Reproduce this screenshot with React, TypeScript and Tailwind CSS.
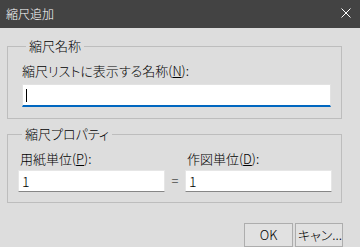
import React from "react";

const font = "font-['Noto_Sans_CJK_JP','Noto_Sans',sans-serif] [font-feature-settings:'palt'] font-light";

export default function App() {
  return (
    <div className={`w-[360px] h-[247px] bg-[#dddddd] flex flex-col text-black overflow-hidden ${font}`}>
      <div className="h-[28px] bg-[#434343] flex items-center justify-between pl-[6px] pr-[9px] text-white text-[12px] leading-[16px]">
        <span>縮尺追加</span>
        <svg width="10" height="10" viewBox="0 0 10 10" className="mt-[-2px]">
          <path d="M0.5 0.5 L9.5 9.5 M9.5 0.5 L0.5 9.5" stroke="#ffffff" strokeWidth="1" fill="none" />
        </svg>
      </div>
      <div className="flex flex-col pl-[7px] pt-[10px]">
        <fieldset className="w-[335px] border border-[#bdbdbd] pl-[14px] pb-[11px]">
          <legend className="ml-[4px] px-[3px] text-[13px] leading-[16px]">縮尺名称</legend>
          <div className="pt-[9px] text-[13px] leading-[16px]">
            縮尺リストに表示する名称(<span className="underline">N</span>):
          </div>
          <div className="mt-[5px] w-[309px] h-[23px] bg-white border border-[#e2e2e2] border-b-2 border-b-[#0067c0] flex items-center pl-[3px]">
            <div className="w-[1px] h-[13px] bg-black" />
          </div>
        </fieldset>
        <fieldset className="mt-[7px] w-[335px] border border-[#bdbdbd] pl-[10px] pb-[10px]">
          <legend className="ml-[4px] px-[3px] text-[13px] leading-[16px]">縮尺プロパティ</legend>
          <div className="pt-[9px] flex items-end text-[13px]">
            <div className="w-[147px] flex flex-col">
              <div className="pl-[2px] leading-[16px]">
                用紙単位(<span className="underline">P</span>):
              </div>
              <div className="mt-[3px] h-[22px] bg-white border border-[#e6e6e6] border-b-[#868686] flex items-center pl-[3px] text-[14px] leading-[16px]">
                1
              </div>
            </div>
            <div className="w-[20px] h-[22px] flex items-center justify-center text-[13px] leading-[16px]">=</div>
            <div className="w-[147px] flex flex-col">
              <div className="pl-[2px] leading-[16px]">
                作図単位(<span className="underline">D</span>):
              </div>
              <div className="mt-[3px] h-[22px] bg-white border border-[#e6e6e6] border-b-[#868686] flex items-center pl-[3px] text-[14px] leading-[16px]">
                1
              </div>
            </div>
          </div>
        </fieldset>
        <div className="mt-[20px] flex justify-end gap-[2px] pr-[17px] text-[13px] leading-[16px]">
          <div className="w-[49px] h-[24px] border border-[#adadad] bg-[#e1e1e1] flex items-center justify-center">OK</div>
          <div className="w-[48px] h-[24px] border border-[#adadad] bg-[#e1e1e1] flex items-center pl-[2px] whitespace-nowrap overflow-hidden">キャン...</div>
        </div>
      </div>
    </div>
  );
}
